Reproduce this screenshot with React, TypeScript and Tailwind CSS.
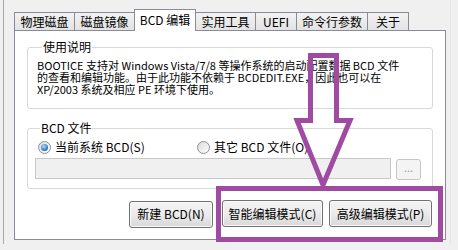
import React from 'react';

const tabs = [
  { label: '物理磁盘', w: 'w-[61px]' },
  { label: '磁盘镜像', w: 'w-[61px]' },
  { label: 'BCD 编辑', w: 'w-[62px]', active: true },
  { label: '实用工具', w: 'w-[61px]' },
  { label: 'UEFI', w: 'w-[42px]' },
  { label: '命令行参数', w: 'w-[72px]' },
  { label: '关于', w: 'w-[42px]' },
];

function Radio({ checked, label }: { checked?: boolean; label: string }) {
  return (
    <label className="flex items-center gap-[4px]">
      <span className="flex h-[13px] w-[13px] items-center justify-center rounded-full border border-[#8e8f8f] bg-gradient-to-br from-[#dcdcdc] to-[#fdfdfd]">
        {checked && (
          <span className="h-[7px] w-[7px] rounded-full bg-[radial-gradient(circle_at_40%_35%,#a6dcff,#2a6fb8_70%,#1b4f8a)]" />
        )}
      </span>
      <span>{label}</span>
    </label>
  );
}

function WinButton({ children, w }: { children: React.ReactNode; w: string }) {
  return (
    <button
      className={`${w} h-[27px] rounded-[3px] border border-[#707070] bg-gradient-to-b from-[#f4f4f4] via-[#ebebeb] to-[#d8d8d8] text-[12px] leading-none text-black shadow-[inset_0_0_0_1px_#fbfbfb]`}
    >
      {children}
    </button>
  );
}

export default function App() {
  return (
    <div className="relative flex h-[250px] w-[458px] overflow-hidden bg-[#f0f0f0] text-black [font-family:'Noto_Sans_CJK_SC','Liberation_Sans',sans-serif]">
      <div className="w-[3px] shrink-0" />
      <div className="h-[244px] shrink-0 border-l border-[#a9a9a9] pl-[10px] pt-[9px]">
        {/* Tab strip */}
        <div className="flex h-[21px] items-end">
          {tabs.map((t, i) => (
            <div
              key={t.label}
              className={`${t.w} ${i > 0 ? '-ml-px' : ''} flex items-center justify-center border border-b-0 border-[#898c95] text-[12px] leading-none ${
                t.active
                  ? 'relative z-10 mb-[-1px] h-[22px] bg-white pb-[1px]'
                  : 'h-[18px] bg-gradient-to-b from-[#f2f2f2] to-[#e3e3e3]'
              }`}
            >
              {t.label}
            </div>
          ))}
        </div>

        {/* Tab panel */}
        <div className="h-[210px] w-[432px] border border-[#898c95] bg-white px-[12px] pt-[9px]">
          <fieldset className="h-[69px] rounded-[3px] border border-[#d9d9d9] px-[9px]">
            <legend className="ml-[5px] px-[1px] text-[12px] leading-[14px]">使用说明</legend>
            <div className="mt-[5px] whitespace-nowrap text-[11px] leading-[12px]">
              <div>BOOTICE 支持对 Windows Vista/7/8 等操作系统的启动配置数据 BCD 文件</div>
              <div>的查看和编辑功能。由于此功能不依赖于 BCDEDIT.EXE，因此也可以在</div>
              <div>XP/2003 系统及相应 PE 环境下使用。</div>
            </div>
          </fieldset>

          <fieldset className="mt-[12px] h-[68px] rounded-[3px] border border-[#d9d9d9] px-[7px]">
            <legend className="ml-[5px] px-[1px] text-[12px] leading-[14px]">BCD 文件</legend>
            <div className="ml-[3px] mt-[5px] flex h-[14px] items-center text-[12px] leading-none">
              <div className="w-[159px]">
                <Radio checked label="当前系统 BCD(S)" />
              </div>
              <Radio label="其它 BCD 文件(O)" />
            </div>
            <div className="mt-[4px] flex items-start gap-[5px]">
              <div className="h-[21px] w-[356px] border border-[#c8c8c8] bg-[#f0f0f0]" />
              <div className="mt-px flex h-[21px] w-[25px] items-center justify-center rounded-[3px] border border-[#c6c6c6] bg-[#f4f4f4] pb-[4px] text-[11px] text-[#a0a0a0]">
                ...
              </div>
            </div>
          </fieldset>

          <div className="mt-[11px] flex justify-end gap-[6px] pr-[1px]">
            <div className="mr-[3px]">
              <WinButton w="w-[84px]">新建 BCD(N)</WinButton>
            </div>
            <WinButton w="w-[101px]">智能编辑模式(C)</WinButton>
            <WinButton w="w-[103px]">高级编辑模式(P)</WinButton>
          </div>
        </div>
      </div>
      <div className="ml-[4px] h-[244px] border-l border-[#e6e6e6]" />

      {/* Annotation: highlight box */}
      <div className="absolute left-[216px] top-[186px] h-[56px] w-[227px] border-[5px] border-[#9e4ba1]" />

      {/* Annotation: arrow */}
      <svg className="absolute left-0 top-0" width="458" height="250" viewBox="0 0 458 250" fill="none">
        <polygon
          points="310.5,55.5 336.5,55.5 336.5,120.5 350,120.5 323,185 297,120.5 310.5,120.5"
          stroke="#9e4ba1"
          strokeWidth="5"
          strokeLinejoin="miter"
        />
      </svg>
    </div>
  );
}
